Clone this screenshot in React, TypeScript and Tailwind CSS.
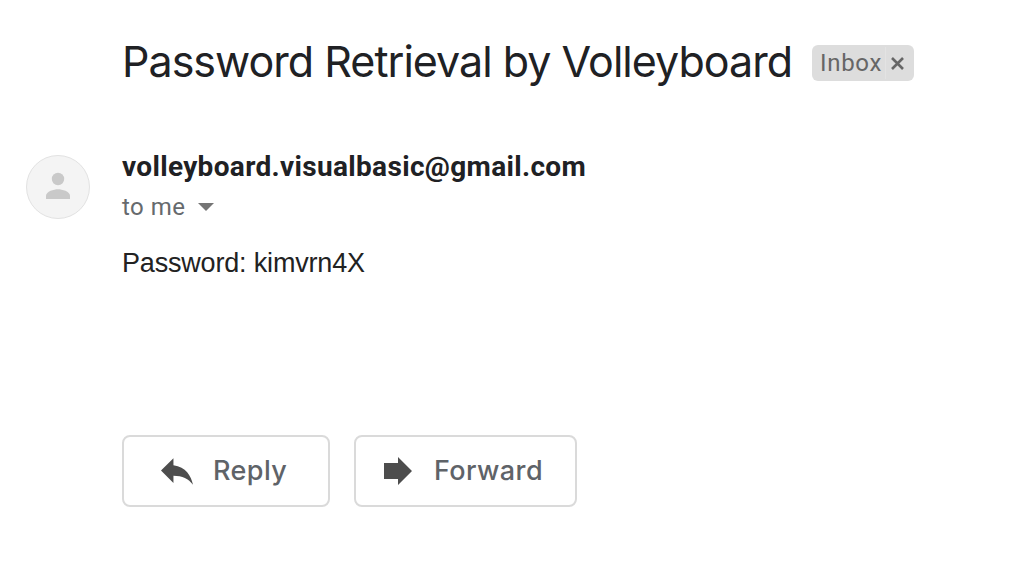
import React from "react";

function Avatar() {
  return (
    <div className="flex size-16 items-center justify-center rounded-full border border-[#e2e2e2] bg-[#f4f4f4]">
      <svg viewBox="0 0 64 64" className="size-16 shrink-0" fill="#c9c9c9">
        <circle cx="32" cy="24" r="6.2" />
        <path d="M20 44v-3.4c0-4.2 8-6.4 12-6.4s12 2.2 12 6.4V44z" />
      </svg>
    </div>
  );
}

function ReplyIcon() {
  return (
    <svg viewBox="3 5 18 15" className="h-[27px] w-8" fill="#4d4d4d">
      <path d="M10 9V5l-7 7 7 7v-4.1c5 0 8.5 1.6 11 5.1-1-5-4-10-11-11z" />
    </svg>
  );
}

function ForwardIcon() {
  return (
    <svg viewBox="0 0 28 28" className="size-7" fill="#4d4d4d">
      <path d="M0 6h14V0l14 14-14 14v-6H0z" />
    </svg>
  );
}

export default function App() {
  return (
    <main className="h-[575px] w-[1020px] overflow-hidden bg-white text-[#202124]">
      <header className="flex h-[126px] items-center pl-[122px]">
        <h1 className="w-[690px] whitespace-nowrap pb-[5px] font-['Inter',sans-serif] text-[43px] leading-[56px] tracking-[-0.98px]">
          Password Retrieval by Volleyboard
        </h1>
        <div className="flex h-9 w-[102px] items-center rounded-md bg-[#dddddd] font-['Roboto',sans-serif] text-2xl text-[#666666]">
          <span className="w-[74px] border-r border-[#e3e3e3] pl-2 tracking-[0.7px]">Inbox</span>
          <svg viewBox="0 0 13 13" className="ml-[5px] size-[13px]" stroke="#666" strokeWidth="2.6">
            <path d="M1 1l11 11M12 1L1 12" />
          </svg>
        </div>
      </header>
      <section className="flex pt-[22px] pl-[26px]">
        <div className="w-24 shrink-0 pt-[7px]">
          <Avatar />
        </div>
        <div>
          <div className="h-[38px] font-['Roboto',sans-serif] text-[28px] font-bold leading-[38px] tracking-[0.33px]">
            volleyboard.visualbasic@gmail.com
          </div>
          <div className="flex h-[42px] items-center font-['Roboto',sans-serif] text-2xl tracking-[0.5px] text-[#666a6d]">
            to me
            <svg viewBox="0 0 16 8" className="ml-3 h-2 w-4" fill="#757575">
              <path d="M0 0h16L8 8z" />
            </svg>
          </div>
          <div className="mt-[15px] font-['Liberation_Sans',sans-serif] text-[27px] leading-[40px] tracking-[-0.18px] text-[#222222]">
            Password: kimvrn4X
          </div>
        </div>
      </section>
      <footer className="flex gap-6 pt-[152px] pl-[122px] font-['Inter',sans-serif] text-[27px] font-medium tracking-[0.4px] text-[#5f6368]">
        <button className="flex h-[72px] w-52 items-center rounded-lg border-2 border-[#dadada] pl-[37px]">
          <ReplyIcon />
          <span className="ml-5 pt-px">Reply</span>
        </button>
        <button className="flex h-[72px] w-[223px] items-center rounded-lg border-2 border-[#dadada] pl-7">
          <ForwardIcon />
          <span className="ml-[22px] pt-px">Forward</span>
        </button>
      </footer>
    </main>
  );
}
